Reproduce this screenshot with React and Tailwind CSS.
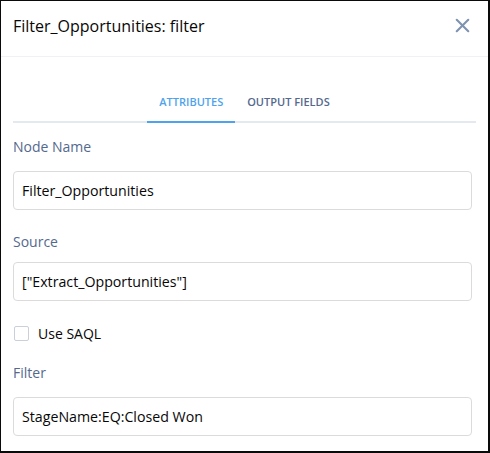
import { X } from 'lucide-react';

const font = { fontFamily: '"Open Sans", "Noto Sans", sans-serif' };

function Label({ children, className = '' }) {
  return <div className={`h-5 text-[14px] leading-5 text-[#54698d] ${className}`}>{children}</div>;
}

function Field({ value, className = '' }) {
  return (
    <div className={`flex items-center h-[39px] rounded border border-[#dddbda] bg-white px-[8px] text-[14.2px] text-[#080707] ${className}`}>
      {value}
    </div>
  );
}

export default function App() {
  return (
    <div style={font} className="w-[490px] h-[453px] bg-white border-l border-t border-r-2 border-b-2 border-[#0a0a0a] flex flex-col overflow-hidden">
      <div className="flex items-center justify-between h-[56px] border-b border-[#eef1f6] pl-[12px] pr-[14px] pb-[6px]">
        <h2 className="text-[16px] text-[#080707]">Filter_Opportunities: filter</h2>
        <button className="text-[#7f93b0]">
          <X size={23} strokeWidth={2.2} />
        </button>
      </div>

      <div className="px-[12px]">
        <div className="mt-[37px] flex justify-center border-b-2 border-[#e4e9f0]">
          <div className="-mb-[2px] px-[12px] pb-[11px] border-b-2 border-[#4fa3ec] text-[11px] leading-4 font-semibold text-[#4fa3ec]">
            ATTRIBUTES
          </div>
          <div className="px-[12px] pb-[11px] text-[11px] leading-4 font-semibold text-[#54698d]">
            OUTPUT FIELDS
          </div>
        </div>

        <Label className="mt-[14px]">Node Name</Label>
        <Field value="Filter_Opportunities" className="mt-[14px] mr-[4px]" />

        <Label className="mt-[22px]">Source</Label>
        <Field value={'["Extract_Opportunities"]'} className="mt-[10px] mr-[4px] h-[38px]" />

        <label className="mt-[22px] flex items-center h-5 gap-[9px] text-[14px] text-[#080707]">
          <span className="ml-[1px] w-[15px] h-[15px] rounded-[2px] border border-[#c9d0da] bg-white" />
          Use SAQL
        </label>

        <Label className="mt-[20px]">Filter</Label>
        <Field value="StageName:EQ:Closed Won" className="mt-[14px] mr-[4px] h-[38px]" />
      </div>
    </div>
  );
}
